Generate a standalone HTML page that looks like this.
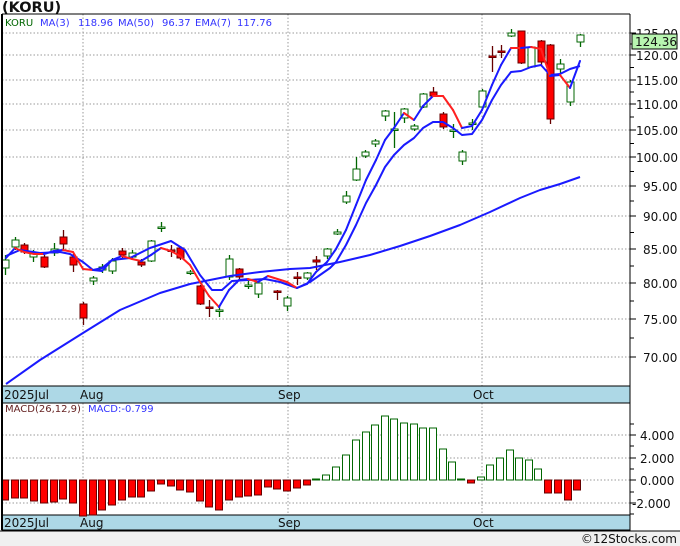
<!DOCTYPE html>
<html><head><meta charset="utf-8"><style>
body{margin:0;background:#fff;width:680px;height:546px;overflow:hidden;font-family:"DejaVu Sans","Liberation Sans",sans-serif}
svg{display:block}
</style></head><body>
<svg id="s" width="680" height="546" xmlns="http://www.w3.org/2000/svg" font-family="DejaVu Sans, Liberation Sans, sans-serif">
<rect x="0" y="0" width="680" height="546" fill="#fff"/>
<rect x="0" y="531" width="680" height="15" fill="#f0f0f0"/>
<text x="2" y="12" font-size="14.5" font-weight="bold" fill="#111">(KORU)</text>
<text x="677" y="543" font-size="12" fill="#111" text-anchor="end">©12Stocks.com</text>
<g id="grid" stroke="#999" stroke-dasharray="1.5,2" stroke-width="1"></g>
<rect x="2" y="386" width="628" height="17" fill="#add8e6" stroke="#000"/>
<rect x="2" y="515" width="628" height="15" fill="#add8e6" stroke="#000"/>
<g font-size="12" fill="#111">
<text x="4" y="399">2025Jul</text><text x="80" y="399">Aug</text><text x="278" y="399">Sep</text><text x="473" y="399">Oct</text>
<text x="4" y="527">2025Jul</text><text x="80" y="527">Aug</text><text x="278" y="527">Sep</text><text x="473" y="527">Oct</text>
</g>
<g id="macd"></g>
<g id="cand"></g>
<g id="lines" fill="none" stroke-width="2" stroke-linejoin="round"></g>
<line x1="2" y1="14" x2="630" y2="14" stroke="#000"/>
<line x1="2" y1="14" x2="2" y2="530" stroke="#000" stroke-width="2"/>
<line x1="630" y1="14" x2="630" y2="530" stroke="#000"/>
<line x1="0" y1="531" x2="680" y2="531" stroke="#000"/>
<g id="axis" font-size="12" fill="#111"></g>
<rect x="632" y="34" width="45" height="15" fill="#b8f5b0" stroke="#000"/>
<text x="635" y="46" font-size="12" fill="#111">124.36</text>
<g font-size="10">
<text x="5" y="26" fill="#060">KORU</text>
<text x="40" y="26" fill="#33f">MA(3)</text><text x="78" y="26" fill="#33f">118.96</text>
<text x="118" y="26" fill="#33f">MA(50)</text><text x="162" y="26" fill="#33f">96.37</text>
<text x="195" y="26" fill="#33f">EMA(7)</text><text x="237" y="26" fill="#33f">117.76</text>
<text x="5" y="412" fill="#622">MACD(26,12,9)</text><text x="88" y="412" fill="#33f">MACD:-0.799</text>
</g>
</svg>
<script>
var NS="http://www.w3.org/2000/svg";
function el(p,t,a){var e=document.createElementNS(NS,t);for(var k in a)e.setAttribute(k,a[k]);document.getElementById(p).appendChild(e);return e;}
var hy=[33,55,80,104,130,157,186,216,249,283,319,357];
var lab=["125.00","120.00","115.00","110.00","105.00","100.00","95.00","90.00","85.00","80.00","75.00","70.00"];
hy.forEach(function(y){el("grid","line",{x1:2,y1:y,x2:630,y2:y});});
[83,288,482].forEach(function(x){el("grid","line",{x1:x,y1:14,x2:x,y2:386});el("grid","line",{x1:x,y1:403,x2:x,y2:515});});
[435,458,480,503].forEach(function(y){el("grid","line",{x1:2,y1:y,x2:630,y2:y});});
hy.forEach(function(y,i){el("axis","line",{x1:630,y1:y,x2:636,y2:y,stroke:"#000"});var t=el("axis","text",{x:lab[i].length>5?636:643,y:y+5});t.textContent=lab[i];});
for(var i=0;i<hy.length-1;i++){var m=(hy[i]+hy[i+1])/2;el("axis","line",{x1:630,y1:m,x2:634,y2:m,stroke:"#000"});}
[[435,"4.000"],[458,"2.000"],[480,"0.000"],[503,"-2.000"]].forEach(function(a){el("axis","line",{x1:630,y1:a[0],x2:636,y2:a[0],stroke:"#000"});var t=el("axis","text",{x:a[1][0]=="-"?632:640,y:a[0]+5});t.textContent=a[1];});
[424,446,469,492,514].forEach(function(y){el("axis","line",{x1:630,y1:y,x2:634,y2:y,stroke:"#000"});});
var C=[[5,260,268,"g",255,275],[15,240,247,"g",237,250],[24,245,252,"r",243,254],[33,253,257,"g",250,262],[44,257,267,"r",255,268],[54,249,253,"g",243,256],[63,237,244,"r",230,250],[73,257,265,"r",254,272],[83,304,318,"r",302,325],[93,278,281,"g",276,285],[102,267,270,"g",264,273],[112,261,271,"g",258,274],[122,251,255,"r",248,258],[132,253,257,"g",250,260],[141,262,265,"r",259,267],[151,241,261,"g",240,262],[161,227,228,"g",222,232],[171,250,251,"r",245,257],[180,248,258,"r",246,260],[190,272,273,"g",270,275],[200,286,304,"r",285,305],[209,307,308,"r",300,317],[219,310,311,"g",306,317],[229,259,277,"g",255,280],[239,269,277,"r",268,279],[248,285,286,"g",281,289],[258,283,294,"g",281,298],[277,291,292,"r",290,300],[287,298,306,"g",296,311],[297,277,278,"r",272,285],[307,273,278,"g",272,280],[316,260,262,"r",256,270],[327,249,256,"g",248,259],[337,232,234,"g",229,235],[346,196,202,"g",191,204],[356,169,180,"g",157,181],[365,152,156,"g",150,158],[375,141,144,"g",139,147],[385,111,116,"g",110,121],[394,129,130,"g",112,148],[404,109,118,"g",108,123],[414,126,129,"g",124,131],[423,94,107,"g",93,108],[433,92,96,"r",87,97],[443,114,127,"r",112,129],[453,130,131,"g",124,138],[462,152,161,"g",150,165],[472,123,124,"g",119,130],[482,91,107,"g",89,108],[492,56,57,"r",46,72],[501,51,52,"r",45,58],[511,33,36,"g",29,37],[521,31,63,"r",31,64],[531,47,67,"g",46,68],[541,41,62,"r",40,65],[550,45,119,"r",44,124],[560,64,69,"g",59,74],[570,82,102,"g",80,106],[580,35,42,"g",34,47]];
C.forEach(function(c){var col=c[3]=="g"?"#060":"#600";el("cand","line",{x1:c[0]+.5,y1:c[4],x2:c[0]+.5,y2:c[5],stroke:col,"stroke-width":1.3});
var h=Math.max(c[2]-c[1],1.5);el("cand","rect",{x:c[0]-3,y:c[1],width:7,height:h,fill:c[3]=="g"?"#fff":"#f00",stroke:col,"stroke-width":1});});
function poly(pts,col){el("lines","polyline",{points:pts.map(function(p){return p.join(",")}).join(" "),stroke:col});}
poly([[6,384],[40,360],[83,333],[120,310],[160,293],[190,284],[230,276],[260,272],[290,269],[310,268],[340,262],[370,255],[400,246],[430,236],[460,225],[490,212],[520,198],[540,190],[560,184],[580,177]],"#1a1aff");
poly([[6,256],[20,250],[40,253],[60,252],[70,254],[83,262],[93,270],[102,271],[112,260],[130,258],[150,248],[171,241],[185,250],[200,275],[212,290],[222,290],[232,281],[248,280],[265,279],[280,282],[297,288],[310,282],[320,275],[330,268],[336,262],[346,245],[356,225],[366,203],[376,185],[385,167],[394,155],[404,145],[414,138],[423,128],[433,122],[443,122],[453,128],[462,135],[472,134],[482,120],[492,100],[501,85],[511,72],[521,71],[531,67],[541,65],[550,75],[560,74],[570,69],[580,66]],"#1a1aff");
var M=[[6,258],[15,248],[24,252],[34,254],[44,254],[54,251],[63,250],[73,252],[83,269],[93,270],[102,268],[112,260],[122,256],[132,259],[141,261],[151,255],[161,248],[171,251],[180,256],[190,265],[200,282],[209,296],[219,307],[229,290],[239,280],[248,279],[258,282],[268,276],[287,282],[297,288],[307,284],[316,272],[327,262],[336,249],[346,230],[356,205],[366,180],[376,160],[385,140],[394,128],[404,113],[414,120],[423,106],[433,96],[443,96],[453,110],[462,128],[472,126],[482,110],[492,85],[501,65],[511,48],[521,48],[531,47],[541,49],[550,76],[560,75],[570,88],[580,61]];
for(var i=1;i<M.length;i++){el("lines","line",{x1:M[i-1][0],y1:M[i-1][1],x2:M[i][0],y2:M[i][1],stroke:M[i][1]>=M[i-1][1]?"#ff2020":"#1a1aff","stroke-width":2,"stroke-linecap":"round"});}
var B=[[5,500],[15,498],[24,498],[34,501],[44,503],[54,502],[63,499],[73,503],[83,516],[93,515],[102,510],[112,505],[122,500],[132,497],[141,497],[151,491],[161,484],[171,486],[180,490],[190,492],[200,501],[209,507],[219,510],[229,500],[239,497],[248,496],[258,495],[268,487],[277,489],[287,491],[297,488],[307,485],[316,479],[326,475],[336,467],[346,455],[356,440],[366,432],[375,425],[385,416],[394,419],[404,423],[414,424],[423,428],[433,428],[443,449],[452,462],[461,479],[471,483],[481,477],[490,465],[500,458],[510,450],[519,458],[529,460],[538,469],[548,493],[558,493],[568,500],[577,490]];
B.forEach(function(b){var neg=b[1]>480;var y=neg?480:b[1],h=Math.abs(b[1]-480);if(h<1)h=1;
el("macd","rect",{x:b[0]-3.5,y:y,width:7,height:h,fill:neg?"#f00":"#fff",stroke:neg?"#600":"#060","stroke-width":1});});
</script>
</body></html>
